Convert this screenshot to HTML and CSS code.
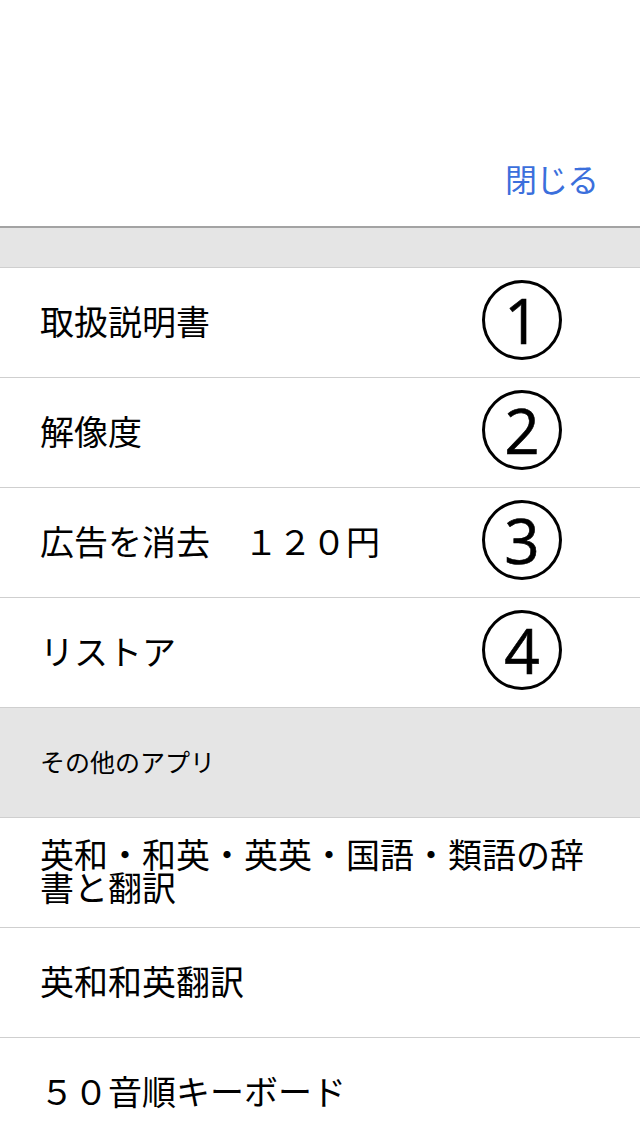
FILE: index.html
```html
<!DOCTYPE html>
<html lang="ja">
<head>
    <meta charset="UTF-8">
    <meta name="viewport" content="width=device-width, initial-scale=1.0">
    <title>設定</title>
    <link rel="stylesheet" href="styles.css">
</head>
<body>

    <div class="header">
        <a class="close" href="#">閉じる</a>
    </div>
    <div class="band"></div>

    <div class="row">
        <span class="label">取扱説明書</span>
        <span class="num">1</span>
    </div>
    <div class="row">
        <span class="label">解像度</span>
        <span class="num">2</span>
    </div>
    <div class="row">
        <span class="label">広告を消去　１２０円</span>
        <span class="num">3</span>
    </div>
    <div class="row">
        <span class="label">リストア</span>
        <span class="num">4</span>
    </div>

    <div class="section">その他のアプリ</div>

    <div class="row">
        <span class="label">英和・和英・英英・国語・類語の辞書と翻訳</span>
    </div>
    <div class="row">
        <span class="label">英和和英翻訳</span>
    </div>
    <div class="row">
        <span class="label">５０音順キーボード</span>
    </div>

</body>
</html>
```

FILE: styles.css
```css
body {
    margin: 0;
    background-color: #fff;
    font-family: "Noto Sans CJK JP", "Noto Sans", sans-serif;
    color: #000;
}
.header {
    height: 194px;
    padding: 0 42px 32px 0;
    display: flex;
    justify-content: flex-end;
    align-items: flex-end;
    border-bottom: 2px solid #a3a3a3;
}
.close {
    color: #3b6fdc;
    font-size: 32px;
    line-height: 32px;
    text-decoration: none;
    letter-spacing: -1px;
}
.band {
    height: 39px;
    background-color: #e5e5e5;
}
.row {
    box-sizing: border-box;
    height: 110px;
    border-top: 1px solid #cfcfcf;
    display: flex;
    align-items: center;
    justify-content: space-between;
    padding: 0 36px 5px 40px;
}
.label {
    font-size: 34px;
    line-height: 33px;
}
.num {
    width: 74px;
    height: 74px;
    margin-right: 42px;
    border: 3px solid #000;
    border-radius: 50%;
    display: flex;
    align-items: center;
    justify-content: center;
    font-family: "Open Sans", "Liberation Sans", sans-serif;
    font-size: 62px;
    line-height: 1;
    -webkit-text-stroke: 0.6px #000;
    flex-shrink: 0;
}
.section {
    box-sizing: border-box;
    height: 110px;
    border-top: 1px solid #cfcfcf;
    background-color: #e5e5e5;
    display: flex;
    align-items: center;
    padding: 0 0 4px 40px;
    font-size: 25px;
}
```
